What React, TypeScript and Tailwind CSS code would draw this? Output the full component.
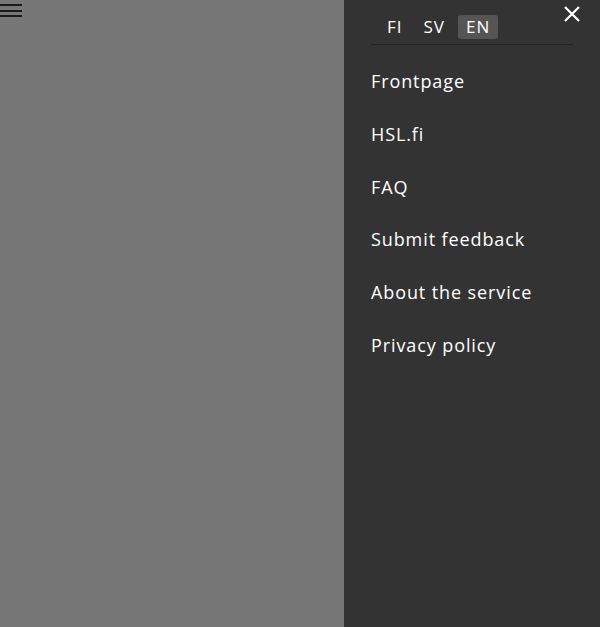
import React from "react";

export default function App() {
  const items = ["Frontpage", "HSL.fi", "FAQ", "Submit feedback", "About the service", "Privacy policy"];
  return (
    <div className="flex h-[627px] w-[600px] overflow-hidden" style={{ fontFamily: '"Open Sans", "Noto Sans", sans-serif' }}>
      <div className="relative w-[344px] bg-[#777777]">
        <div className="flex w-[22px] flex-col gap-[3.5px] pt-[4px]">
          <div className="h-[2px] bg-[#1a1a1a]" />
          <div className="h-[2px] bg-[#1a1a1a]" />
          <div className="h-[2px] bg-[#1a1a1a]" />
        </div>
      </div>
      <div className="relative flex w-[256px] flex-col bg-[#333333] px-[27px] text-white">
        <button className="absolute right-[19px] top-[5px] h-[18px] w-[18px]">
          <svg viewBox="0 0 18 18" width="18" height="18">
            <path d="M2 2 L16 16 M16 2 L2 16" stroke="white" strokeWidth="2.2" strokeLinecap="butt" />
          </svg>
        </button>
        <div className="flex items-center gap-[5px] border-b border-[#222222] pb-[5px] pl-[8px] pt-[15px] text-[17px] font-medium tracking-[1px]">
          <span className="px-[8px] leading-[24px]">FI</span>
          <span className="px-[8px] leading-[24px]">SV</span>
          <span className="rounded-[3px] bg-[#555555] px-[8px] leading-[24px]">EN</span>
        </div>
        <div className="flex flex-col pt-[24px]">
          {items.map((t) => (
            <div key={t} className="h-[52.8px] text-[18px] font-medium leading-[24px] tracking-[0.9px]">
              {t}
            </div>
          ))}
        </div>
      </div>
    </div>
  );
}
